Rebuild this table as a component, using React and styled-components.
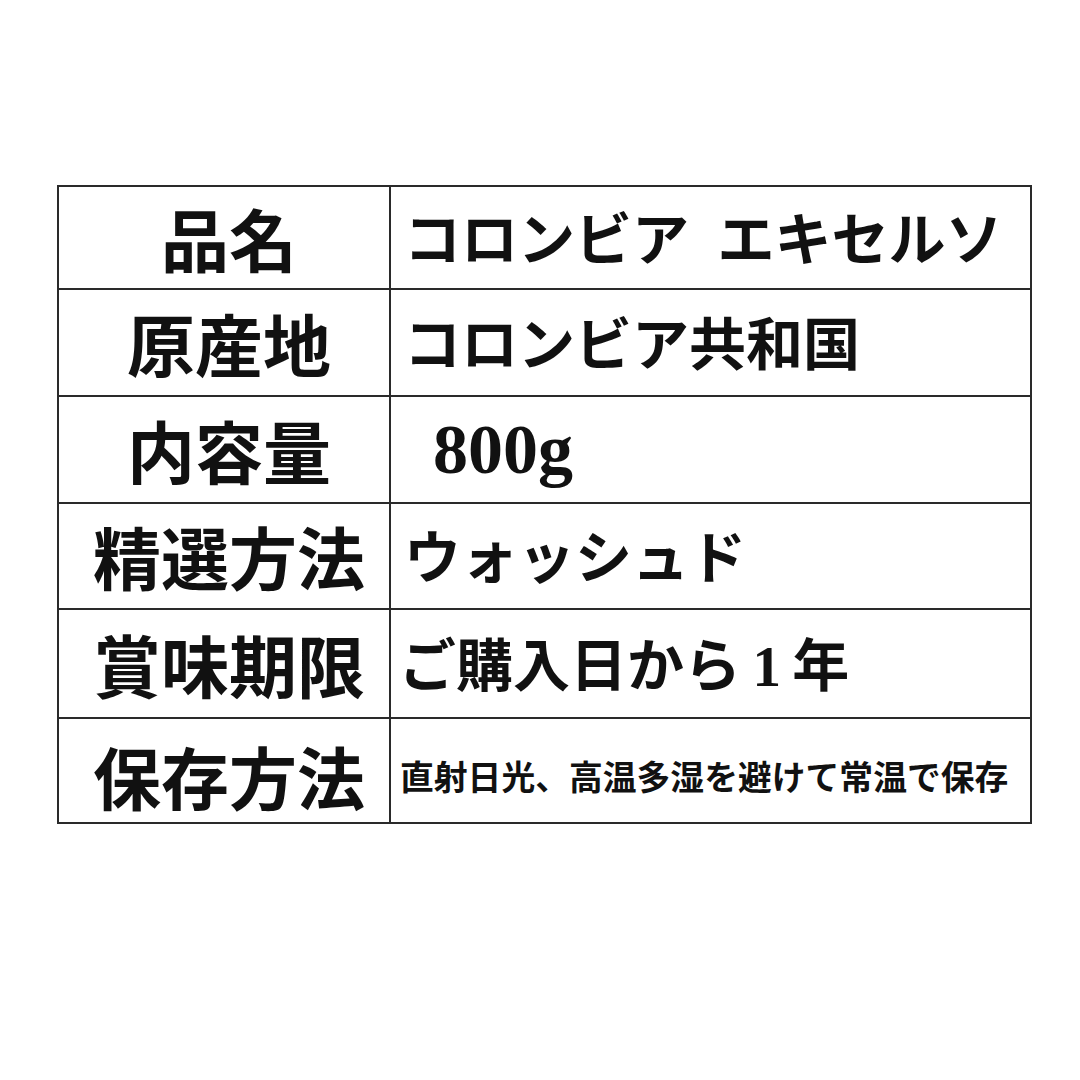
import React from "react";
import styled, { createGlobalStyle } from "styled-components";

const GlobalStyle = createGlobalStyle`
  html, body {
    margin: 0;
    padding: 0;
    background: #ffffff;
  }
  body {
    font-family: "Noto Sans CJK JP", "Noto Sans", sans-serif;
    color: #111;
  }
`;

const Page = styled.div`
  width: 1080px;
  height: 1080px;
  box-sizing: border-box;
  padding: 185px 0 0 57px;
`;

const Table = styled.table`
  width: 975px;
  border-collapse: collapse;
  table-layout: fixed;
`;

const Row = styled.tr`
  height: ${(p) => p.$h}px;
`;

const Label = styled.th`
  width: 332px;
  box-sizing: border-box;
  border: 2px solid #2a2a2a;
  padding: ${(p) => p.$top || 0}px 0 0 10px;
  font-family: "Noto Sans CJK JP", sans-serif;
  font-weight: 700;
  font-size: 68px;
  line-height: 1;
  text-align: center;
  vertical-align: middle;
  white-space: nowrap;
`;

const Value = styled.td`
  box-sizing: border-box;
  border: 2px solid #2a2a2a;
  padding: ${(p) => p.$top || 0}px 0 0 ${(p) => p.$left ?? 13}px;
  font-family: "Liberation Serif", "Noto Sans CJK JP", serif;
  font-weight: 700;
  font-size: ${(p) => p.$size || 57}px;
  line-height: 1;
  text-align: left;
  vertical-align: middle;
  white-space: nowrap;
`;

const Kana = styled.span`
  font-family: "Noto Sans CJK JP", sans-serif;
`;

const Gap = styled.span`
  display: inline-block;
  width: 0.5em;
`;

const Digit = styled.span`
  padding: 0 0.2em;
`;

const rows = [
  {
    label: "品名",
    value: (
      <Kana>
        コロンビア<Gap />エキセルソ
      </Kana>
    ),
    h: 103,
  },
  { label: "原産地", value: <Kana>コロンビア共和国</Kana>, h: 107 },
  { label: "内容量", value: "800g", h: 107, left: 42, size: 70 },
  { label: "精選方法", value: <Kana>ウォッシュド</Kana>, h: 106 },
  {
    label: "賞味期限",
    value: (
      <>
        <Kana>ご購入日から</Kana>
        <Digit>1</Digit>
        <Kana>年</Kana>
      </>
    ),
    h: 109,
    left: 8,
  },
  {
    label: "保存方法",
    value: <Kana>直射日光、高温多湿を避けて常温で保存</Kana>,
    h: 105,
    left: 9,
    size: 33.8,
    top: 14,
    labelTop: 10,
  },
];

export default function App() {
  return (
    <>
      <GlobalStyle />
      <Page>
        <Table>
          <tbody>
            {rows.map((r) => (
              <Row key={r.label} $h={r.h}>
                <Label $top={r.labelTop}>{r.label}</Label>
                <Value $left={r.left} $size={r.size} $top={r.top}>
                  {r.value}
                </Value>
              </Row>
            ))}
          </tbody>
        </Table>
      </Page>
    </>
  );
}
